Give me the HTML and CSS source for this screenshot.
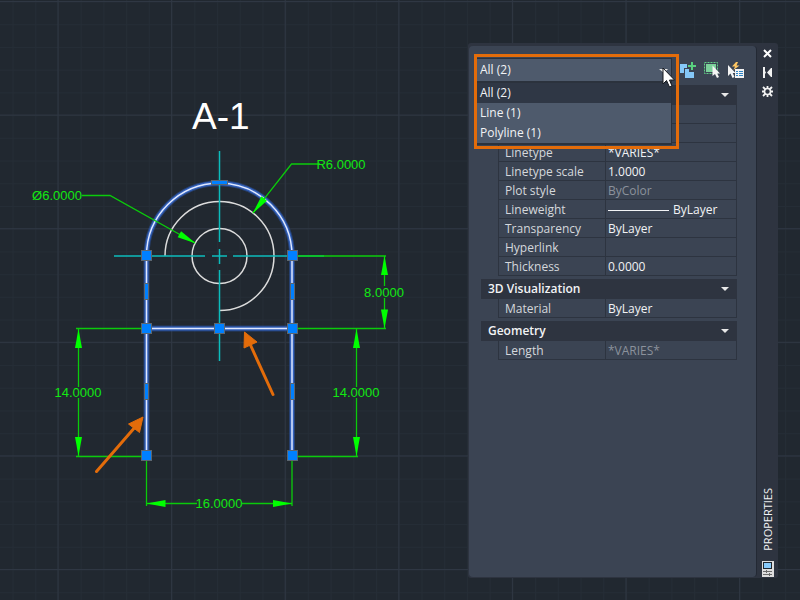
FILE: index.html
```html
<!DOCTYPE html>
<html lang="en">
<head>
<meta charset="utf-8">
<title>Properties</title>
<link rel="stylesheet" href="styles.css">
</head>
<body>
<main class="workspace">
  <svg class="drawing" viewBox="0 0 800 600" preserveAspectRatio="xMinYMin slice" role="img" aria-label="Drawing A-1">
    <defs>
      <pattern id="minor" x="12.5" y="1.5" width="22.72" height="22.72" patternUnits="userSpaceOnUse">
        <path class="grid-minor" d="M.5 0V23M0 .5H23"/>
      </pattern>
      <pattern id="major" x="57.5" y="1" width="113.6" height="113.6" patternUnits="userSpaceOnUse">
        <path class="grid-major" d="M.5 0V114M0 .5H114"/>
      </pattern>
      <path id="tip" d="M0 0L-3.5 19H3.5Z"/>
      <rect id="grip" x="-5" y="-5" width="10" height="10"/>
      <rect id="midgrip" x="-2" y="-8" width="4" height="16"/>
    </defs>
    <rect width="800" height="600" fill="url(#minor)"/>
    <rect width="800" height="600" fill="url(#major)"/>

    <text class="title" x="192" y="129">A-1</text>

    <g class="part">
      <circle cx="219.5" cy="256" r="27.5"/>
      <path d="M165 256A54.5 54.5 0 1 1 219.5 310.5"/>
    </g>
    <g class="selected">
      <path class="glow" d="M146.5 456V256A72.75 72.75 0 0 1 292 256V456M146.5 328.5H292"/>
      <path class="halo" d="M146.5 456V256A72.75 72.75 0 0 1 292 256V456M146.5 328.5H292"/>
      <path class="core" d="M146.5 456V256A72.75 72.75 0 0 1 292 256V456M146.5 328.5H292"/>
    </g>
    <path class="center" d="M219.5 151V242M219.5 249V264M219.5 270V361M114 256H205M212 256H227M233 256H324"/>

    <g class="dimension">
      <path d="M82 195.5H110L195 243M320 164H291.5L253 213M297 256H386M297 328.5H386M384.5 256V286M384.5 298V328M76 328.5H142M76 456.5H142M78.5 328V387M78.5 398V456M356.5 328V387M356.5 398V456M297 456.5H358M146.5 460V506M292 460V506M146.5 503.5H197M242 503.5H292"/>
      <g>
        <use href="#tip" transform="translate(78.5 329)"/>
        <use href="#tip" transform="translate(78.5 456) rotate(180)"/>
        <use href="#tip" transform="translate(356.5 329)"/>
        <use href="#tip" transform="translate(356.5 456) rotate(180)"/>
        <use href="#tip" transform="translate(384.5 256)"/>
        <use href="#tip" transform="translate(384.5 328.5) rotate(180)"/>
        <use href="#tip" transform="translate(146.5 503.5) rotate(-90)"/>
        <use href="#tip" transform="translate(292 503.5) rotate(90)"/>
        <use href="#tip" transform="translate(196 243.5) rotate(119)"/>
        <use href="#tip" transform="translate(252.5 213.5) rotate(218)"/>
      </g>
      <text x="57" y="200">Ø6.0000</text>
      <text x="341" y="169">R6.0000</text>
      <text x="384" y="297">8.0000</text>
      <text x="78" y="397">14.0000</text>
      <text x="356" y="397">14.0000</text>
      <text x="219" y="508">16.0000</text>
    </g>

    <g class="grips">
      <use href="#grip" x="146.5" y="255.5"/>
      <use href="#grip" x="292.5" y="255.5"/>
      <use href="#grip" x="146.5" y="328.5"/>
      <use href="#grip" x="219.5" y="328.5"/>
      <use href="#grip" x="292.5" y="328.5"/>
      <use href="#grip" x="146.5" y="455.5"/>
      <use href="#grip" x="292.5" y="455.5"/>
      <use href="#midgrip" x="146.5" y="291.5"/>
      <use href="#midgrip" x="292.5" y="291.5"/>
      <use href="#midgrip" x="146.5" y="391.5"/>
      <use href="#midgrip" x="292.5" y="391.5"/>
      <use href="#midgrip" transform="translate(219.5 182.5) rotate(90)"/>
    </g>

    <g>
      <path class="shaft" d="M96.5 471.5L136 426M273 394.5L250 344"/>
      <path class="head" d="M143 417L128.5 424L139.5 432.5ZM244.5 332L244 348L257 342Z"/>
    </g>
  </svg>

  <aside class="palette" aria-label="Properties">
    <div class="client">
      <div class="toolbar">
        <div class="picker">
          <select class="picker-select" aria-label="Object type">
            <option>All (2)</option>
            <option>Line (1)</option>
            <option>Polyline (1)</option>
          </select>
          <div class="picker-menu">
            <button class="choice active" type="button">All (2)</button>
            <button class="choice" type="button">Line (1)</button>
            <button class="choice" type="button">Polyline (1)</button>
          </div>
          <svg class="pointer" viewBox="0 0 16 21" aria-hidden="true"><path d="M0 2H9L5 6Z" fill="#e8e8e8"/><path d="M4 1V17L7.5 13.5L10.5 20L13 19L10.5 13H15.5Z" fill="#fff" stroke="#16191f"/></svg>
        </div>
        <button class="tool" type="button" aria-label="Toggle pick add"><svg viewBox="0 0 16 16"><path d="M0 2H7V6H4V11H0Z" fill="#85c8f8"/><path d="M5 7H9V10H14V16H5Z" fill="#85c8f8"/><path d="M12 0V8M8 4H16" stroke="#59d07f" stroke-width="2"/></svg></button>
        <button class="tool" type="button" aria-label="Select objects"><svg viewBox="0 0 16 16"><rect x=".5" y=".5" width="13" height="11" fill="none" stroke="#62d088" stroke-dasharray="2 1"/><rect x="2" y="2" width="10" height="8" fill="#7bd09a"/><path d="M8.5 3.5V14L11 12L13 16L15 15L13.2 11.5H16Z" fill="#f4f4f4"/></svg></button>
        <button class="tool" type="button" aria-label="Quick select"><svg viewBox="0 0 16 16"><path d="M8 0L4 4.5H7L5.5 8L11.5 3.5H8.5L10 0Z" fill="#ffc661"/><path d="M0 3V14L2.5 11.5L4.5 16L6.5 15L4.7 11H7.5Z" fill="#f4f4f4"/><path d="M7 7H16V16H7Z" fill="#f2f2f2"/><path d="M8 9.5H10M8 11.5H10M8 13.5H10M11 9.5H15M11 11.5H15M11 13.5H15" stroke="#2e83c4"/></svg></button>
      </div>

      <section class="group">
        <h2 class="group-title"><button class="toggle" type="button" aria-label="General"></button></h2>
        <table class="fields">
          <tr><th scope="row"></th><td></td></tr>
          <tr><th scope="row"></th><td></td></tr>
          <tr><th scope="row">Linetype</th><td>*VARIES*</td></tr>
          <tr><th scope="row">Linetype scale</th><td>1.0000</td></tr>
          <tr><th scope="row">Plot style</th><td class="muted">ByColor</td></tr>
          <tr><th scope="row">Lineweight</th><td><span class="weight">ByLayer</span></td></tr>
          <tr><th scope="row">Transparency</th><td>ByLayer</td></tr>
          <tr><th scope="row">Hyperlink</th><td></td></tr>
          <tr><th scope="row">Thickness</th><td>0.0000</td></tr>
        </table>
      </section>
      <section class="group">
        <h2 class="group-title"><button class="toggle" type="button">3D Visualization</button></h2>
        <table class="fields">
          <tr><th scope="row">Material</th><td>ByLayer</td></tr>
        </table>
      </section>
      <section class="group">
        <h2 class="group-title"><button class="toggle" type="button">Geometry</button></h2>
        <table class="fields">
          <tr><th scope="row">Length</th><td class="muted">*VARIES*</td></tr>
        </table>
      </section>
    </div>

    <div class="titlebar">
      <button class="control" type="button" aria-label="Close"><svg viewBox="0 0 11 11"><path d="M2 2L9 9M9 2L2 9" stroke="#fff" stroke-width="2"/></svg></button>
      <button class="control" type="button" aria-label="Auto-hide"><svg viewBox="0 0 11 11"><path d="M1 0H3V4L4 5.5L3 7V11H1ZM10 1V10H9L5 5.5L9 1Z" fill="#f2f2f2"/></svg></button>
      <button class="control" type="button" aria-label="Settings"><svg viewBox="0 0 11 11"><circle cx="5.5" cy="5.5" r="3" fill="none" stroke="#f2f2f2" stroke-width="1.6"/><path d="M5.5 0V2.5M5.5 8.5V11M0 5.5H2.5M8.5 5.5H11M1 1L3.5 3.5M10 1L7.5 3.5M1 10L3.5 7.5M10 10L7.5 7.5" stroke="#f2f2f2" stroke-width="1.8"/></svg></button>
      <span class="caption">PROPERTIES</span>
      <svg class="badge" viewBox="0 0 12 16" aria-hidden="true"><path d="M0 0H12V16H0Z" fill="#dedede"/><rect x="1.5" y="1.5" width="8" height="6" fill="#86c9fa" stroke="#20272f"/><path d="M1 10.5H10M1 13.5H10M4.5 9V12M7.5 12V15" stroke="#6b6b6b"/></svg>
    </div>
  </aside>
</main>
</body>
</html>
```
FILE: styles.css
```css
* {
  box-sizing: border-box;
}

body {
  margin: 0;
  background: #212830;
  color: #f2f3f5;
  font: 12px/18px "Open Sans", "Noto Sans", sans-serif;
}

button,
select {
  margin: 0;
  padding: 0;
  border: 0;
  background: none;
  color: inherit;
  font: inherit;
}

.workspace {
  position: relative;
  min-height: 100vh;
  overflow: hidden;
}

/* Drawing */
.drawing {
  position: absolute;
  inset: 0;
  width: 100%;
  height: 100%;
}

.drawing path,
.part circle {
  fill: none;
}

.grid-minor { stroke: #252d36; }
.grid-major { stroke: #2f3743; }

.title {
  fill: #fff;
  font: 37px "Liberation Sans", sans-serif;
}

.part {
  stroke: #dcdcdc;
  stroke-width: 1.5;
}

.glow {
  stroke: #2a55ad;
  stroke-opacity: .5;
  stroke-width: 6;
}

.halo {
  stroke: #3260ba;
  stroke-width: 4;
}

.core {
  stroke: #dfe8ff;
  stroke-width: 1.5;
}

.center {
  stroke: #0cbcbc;
  stroke-width: 1.5;
}

.dimension {
  stroke: #0bcb0b;
  stroke-width: 1.3;
}

.dimension text {
  fill: #12e812;
  stroke: none;
  font: 13px "Liberation Sans", sans-serif;
  text-anchor: middle;
}

.drawing #tip {
  fill: #0f0;
  stroke: none;
}

.grips {
  fill: #0080ff;
  stroke: #5c6670;
}

.drawing .shaft {
  stroke: #e36c0a;
  stroke-width: 3;
  stroke-linecap: round;
}

.drawing .head {
  fill: #e36c0a;
  stroke: #e36c0a;
}

/* Palette window */
.palette {
  position: absolute;
  top: 43px;
  right: 22px;
  bottom: 22px;
  display: grid;
  grid-template-columns: 1fr 21px;
  width: 310px;
  padding: 3px 0 1px 1px;
  border-radius: 3px;
  background: #2e3440;
}

.client {
  border-right: 1px solid #232934;
  border-radius: 4px;
  background: #3b4453;
}

.toolbar {
  display: flex;
  align-items: center;
  gap: 8px;
  height: 39px;
  padding: 9px 12px 0 8px;
}

.picker {
  position: relative;
  flex: 1;
}

.picker-select {
  display: block;
  width: 100%;
  height: 24px;
  padding: 0 3px;
  border: 1px solid #2b323d;
  border-left: 0;
  appearance: none;
  background: #4e5a6c;
}

.picker-menu {
  position: absolute;
  z-index: 1;
  top: 100%;
  left: 0;
  right: 0;
  display: grid;
  border: solid #2b323d;
  border-width: 1px 1px 2px 0;
  background: #4e5a6c;
}

.choice {
  height: 20px;
  padding: 0 3px;
  text-align: left;
}

.choice.active {
  background: #2f3745;
}

/* Frame that calls attention to the open list */
.picker::after {
  content: "";
  position: absolute;
  z-index: 2;
  top: -4px;
  right: -7px;
  bottom: -67px;
  left: -3px;
  border: 3px solid #e36c0a;
}

.pointer {
  position: absolute;
  z-index: 3;
  top: 9px;
  right: -3px;
  width: 16px;
  height: 21px;
}

.tool,
.tool svg {
  display: block;
  width: 16px;
  height: 16px;
}

.group {
  margin: 0 19px 3px 12px;
}

.group-title {
  margin: 0;
  background: #2e3440;
  font-size: 12px;
}

.toggle {
  display: flex;
  align-items: center;
  justify-content: space-between;
  width: 100%;
  height: 20px;
  padding: 0 8px 0 7px;
  font-weight: 600;
}

.toggle::after {
  content: "";
  margin-left: auto;
  border: solid transparent;
  border-width: 4px 4px 0;
  border-top-color: #e8e8e8;
}

.fields {
  width: calc(100% - 17px);
  margin-left: 17px;
  border-left: 1px solid #2d3440;
  border-spacing: 0;
  table-layout: fixed;
  line-height: 16px;
}

.fields th,
.fields td {
  height: 19px;
  padding: 2px 2px 0;
  border: solid #2d3440;
  border-width: 0 1px 1px 0;
  font-weight: 400;
  text-align: left;
  white-space: nowrap;
}

.fields th {
  width: 107px;
  padding-left: 6px;
  color: #d5d8dc;
}

.fields .muted {
  color: #8b929c;
}

.weight {
  display: flex;
  align-items: center;
  gap: 4px;
}

.weight::before {
  content: "";
  width: 61px;
  height: 1px;
  background: #f2f3f5;
}

/* Vertical title bar */
.titlebar {
  display: flex;
  flex-direction: column;
  align-items: center;
  gap: 8px;
  padding-top: 2px;
}

.control,
.control svg {
  display: block;
  width: 11px;
  height: 11px;
}

.caption {
  margin: auto 0 2px;
  font-size: 11px;
  writing-mode: vertical-rl;
  transform: rotate(180deg);
}

.badge {
  width: 12px;
  height: 16px;
}
```
